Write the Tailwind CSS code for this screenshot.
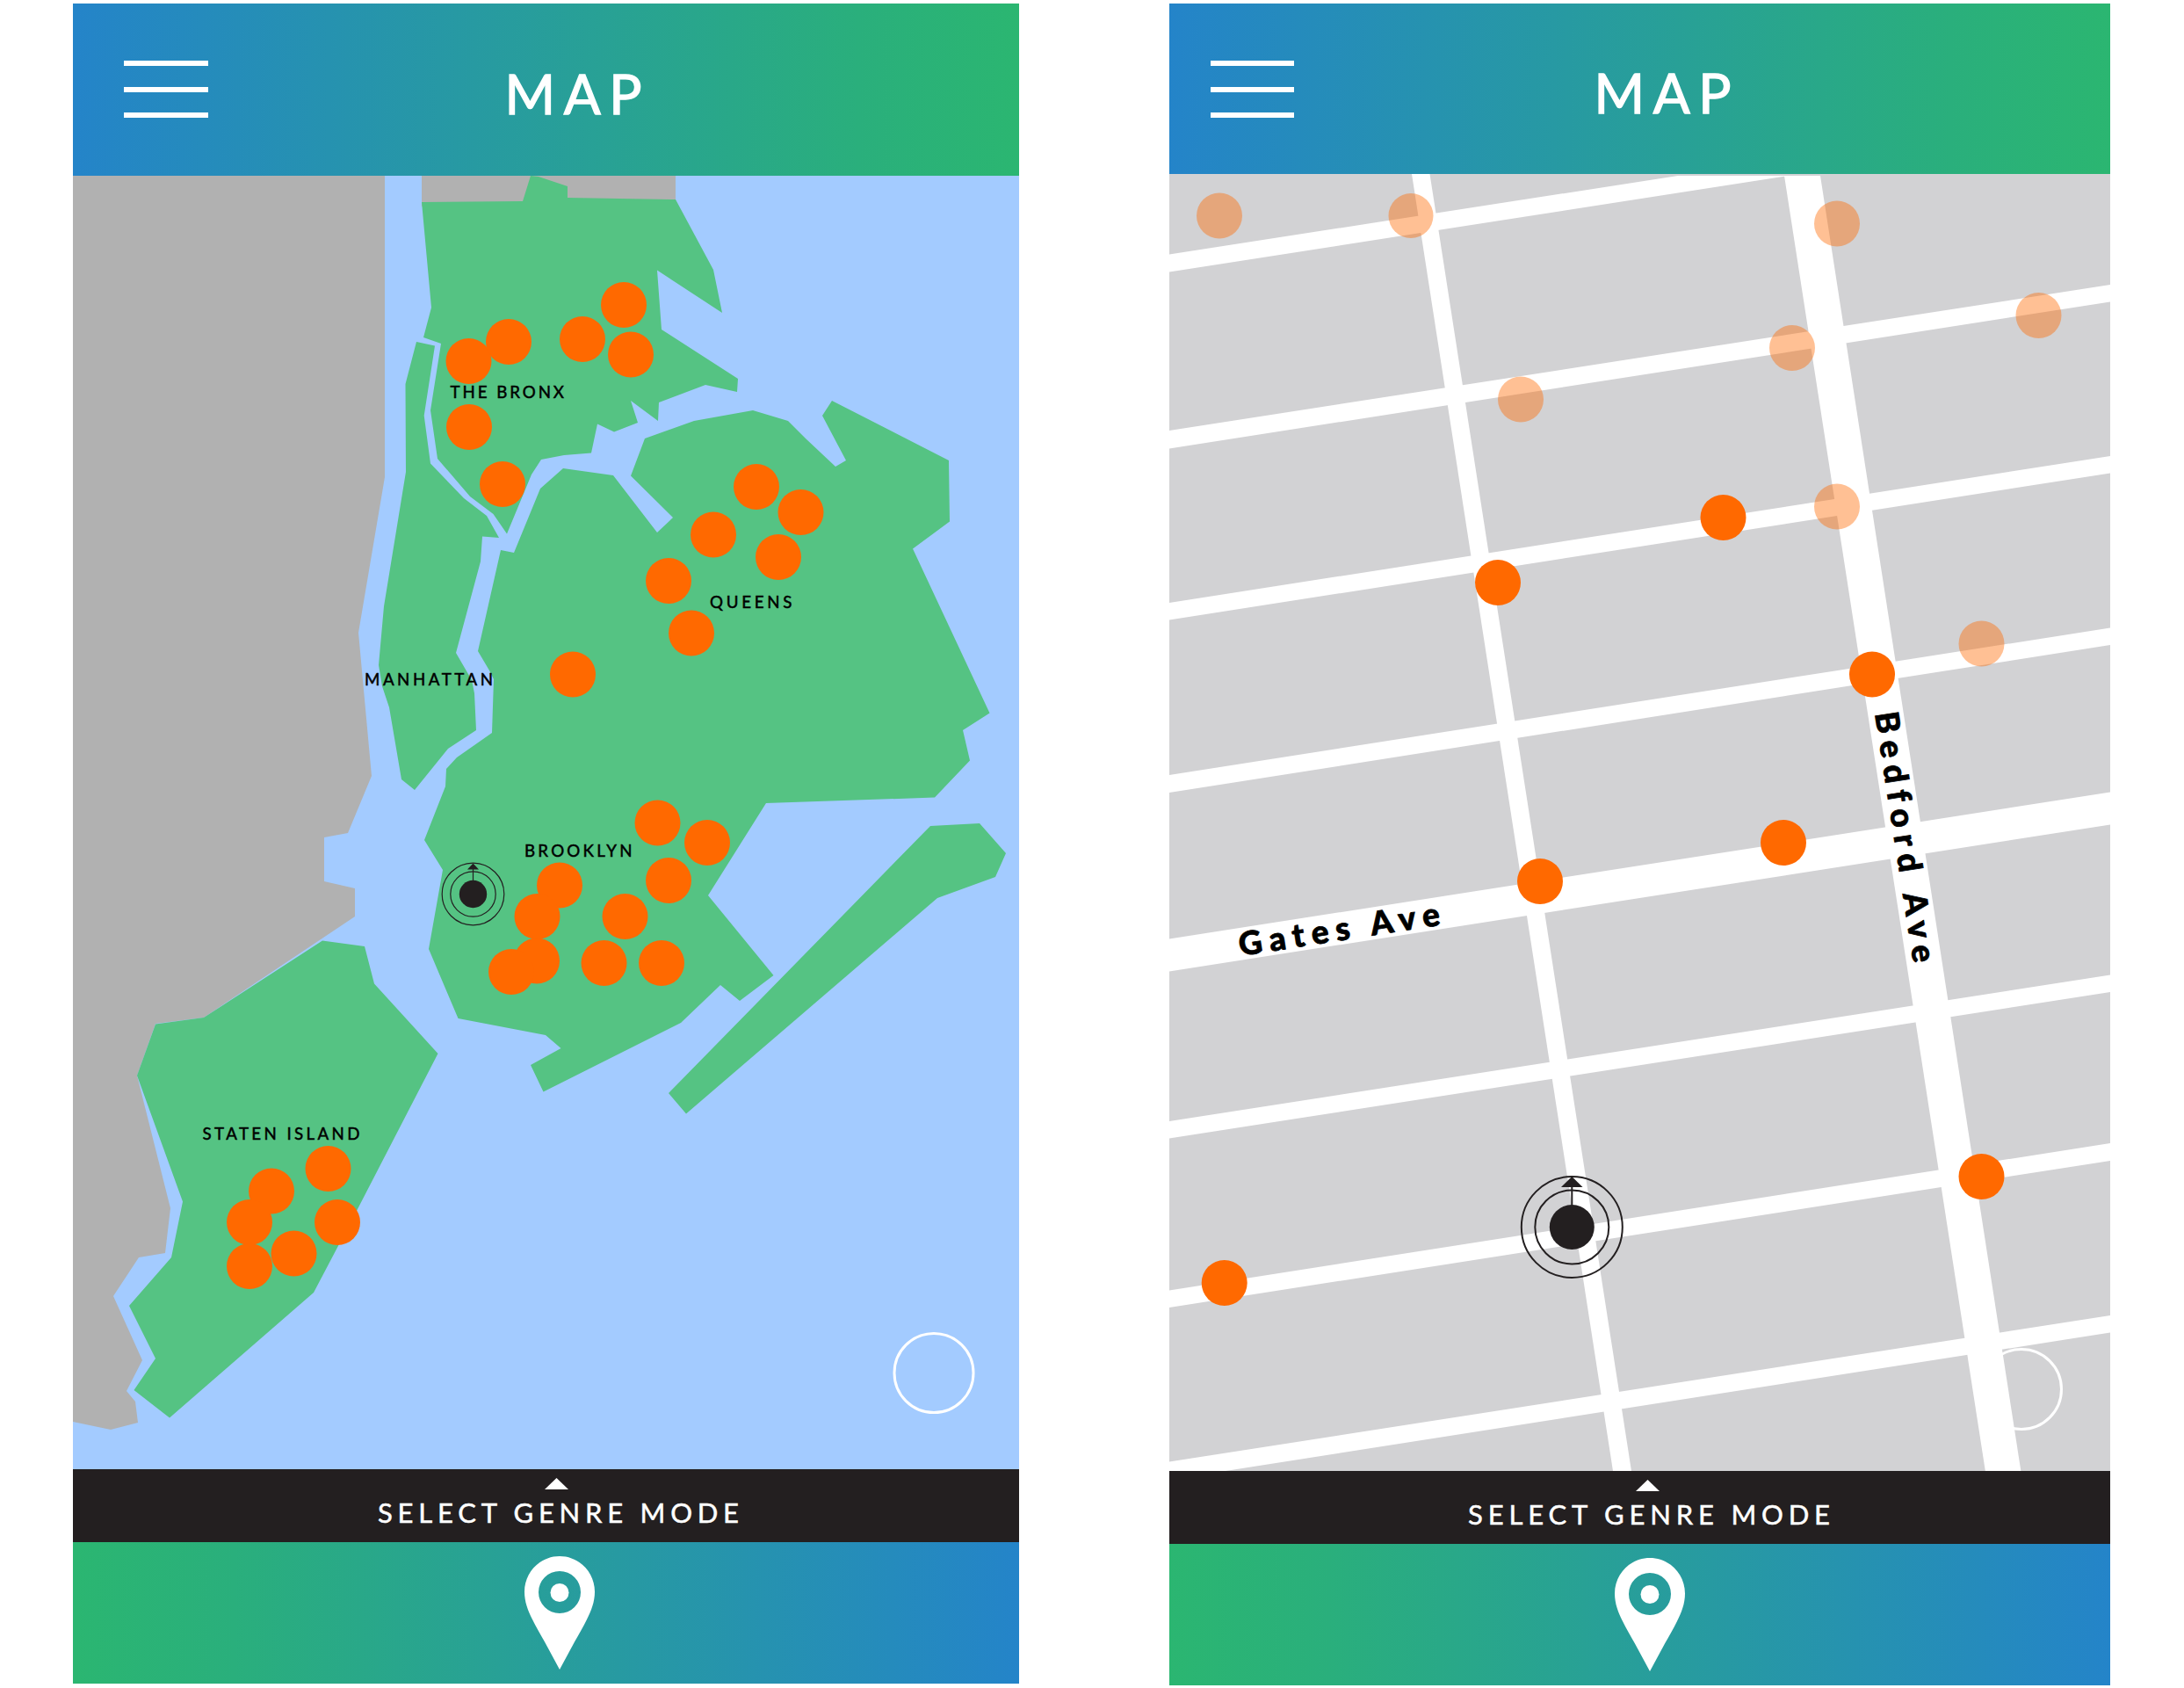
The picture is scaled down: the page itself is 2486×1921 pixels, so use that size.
<!DOCTYPE html>
<html lang="en">
<head>
<meta charset="utf-8">
<title>Map</title>
<script src="https://cdn.jsdelivr.net/npm/@tailwindcss/browser@4"></script>
</head>
<body class="bg-white w-[2486px] h-[1921px] overflow-hidden font-['Lato',sans-serif]">
<svg class="hidden">
  <symbol id="pin" viewBox="0 0 80 129">
    <path fill="#fff" fill-rule="evenodd" d="M40 0C18 0 0 18 0 40.500C0 52 4 62 9 72C13 80 18 89 23 97.500L40 129L57 97.500C62 89 67 80 71 72C76 62 80 52 80 40.500C80 18 62 0 40 0ZM40 17A24 24 0 1 1 40 65A24 24 0 1 1 40 17Z"/>
    <circle cx="40" cy="41.500" r="10.500" fill="#fff"/>
  </symbol>
</svg>
<main class="flex items-start gap-[171px] pl-[83px] pt-1">

  <!-- Borough overview -->
  <section class="w-[1077px] flex flex-col">
    <header class="h-[196px] flex items-start bg-linear-to-r/srgb from-[#2484c9] via-[#2aaf7c] via-83% to-[#2bb671] pl-[58px]">
      <div class="w-24 pt-[65px] flex flex-col gap-[23.500px]">
        <span class="h-1.5 bg-white"></span><span class="h-1.5 bg-white"></span><span class="h-1.5 bg-white"></span>
      </div>
      <svg class="ml-[339px] mt-[76px] w-[154px] h-[50px] overflow-visible" fill="#fff" stroke="#fff" stroke-width="1.400"><text x="-1.500" y="50" font-size="62" textLength="156">MAP</text></svg>
    </header>
    <svg class="w-[1077px] h-[1472px] bg-[#a3cbff]" viewBox="83 200 1077 1472">
      <g fill="#b1b1b1">
        <path d="M83 200H438V543L408 720L423 883L396 948L369 953V1003L404 1011V1043L232 1158L177 1165L156 1224L194 1375L188 1426L158 1431L129 1475L162 1548L144 1583L154 1595L157 1619L126 1627L83 1618Z"/>
        <path d="M480 200H769V235H480Z"/>
      </g>
      <g fill="#55c383">
        <path d="M480 230L595 229L604 200L613 201L646 212V225L769 227L812 307L822 356L748 307.500L753 375L840 431L839 446L803 438L750 458L749 479L718 456L726 481L699 491.500L680 482.500L673 515.500L642 518L616 523L605 540L577 607.500L561.500 585L535 565L498 522L490 467L502 391L482 384L491 350Z"/>
        <path d="M474 389L495 393.500L482.700 473L490 527.500L528 567L554 587L568 612L549 610.500L547 639L519 743L537 774L540 789L542 831L510 852L472 899L457 887L443 805L435 781L431 757L437 690L462 537L461.500 437Z"/>
        <path d="M570 626L585 629L615 556L641 533L698 541L748 606L766 589L718 541.500L734 499L790 479L857 467L897 479L917 499L951 531L963 524L936 473L947 456L1080 524L1081 593.500L1039 624.500L1126.500 811.500L1096 831L1104 865.500L1064 907.500L872 914L806 1019L880.500 1110L842 1139L820 1121L775 1164L618.500 1242.500L604 1212L638.500 1193L621 1178L521.500 1159L488 1080L504 990L483 956L507 895L508 875L520 862L560 834L562 773L557 763L544 741Z"/>
        <path d="M1059 940L1115 937L1145 971L1133 998L1067 1022L781 1267.500L761 1244Z"/>
        <path d="M367 1070.500L415 1077L426 1119.500L498.500 1199L407 1376L357 1471L193 1613.500L152.500 1582L177 1546L147 1486L195 1431L208 1367.500L156 1224L177 1165.500L232 1158Z"/>
      </g>
      <g fill="#ff6900">
        <circle cx="533.500" cy="411" r="26"/><circle cx="579" cy="389" r="26"/><circle cx="663" cy="386" r="26"/><circle cx="710" cy="347" r="26"/><circle cx="718" cy="403.500" r="26"/><circle cx="534" cy="486" r="26"/><circle cx="572" cy="551" r="26"/>
        <circle cx="861" cy="554" r="26"/><circle cx="911.500" cy="583" r="26"/><circle cx="812" cy="608.500" r="26"/><circle cx="886" cy="634" r="26"/><circle cx="761" cy="661" r="26"/><circle cx="787" cy="720.500" r="26"/><circle cx="652" cy="767.500" r="26"/>
        <circle cx="748.500" cy="936.500" r="26"/><circle cx="805" cy="959" r="26"/><circle cx="761" cy="1002" r="26"/><circle cx="637" cy="1007.500" r="26"/><circle cx="711.500" cy="1043" r="26"/><circle cx="611.500" cy="1043" r="26"/><circle cx="611" cy="1093.500" r="26"/><circle cx="582" cy="1106" r="26"/><circle cx="687.500" cy="1096" r="26"/><circle cx="753" cy="1096" r="26"/>
        <circle cx="373.500" cy="1330" r="26"/><circle cx="309" cy="1355.500" r="26"/><circle cx="284" cy="1391" r="26"/><circle cx="384" cy="1391" r="26"/><circle cx="334.500" cy="1426.500" r="26"/><circle cx="284" cy="1441" r="26"/>
      </g>
      <g fill="none" stroke="#231f20" stroke-width="1.200">
        <circle cx="538.500" cy="1017.500" r="35.300"/><circle cx="538.500" cy="1017.500" r="25.700"/><path d="M538.500 1005V986"/>
        <circle cx="538.500" cy="1017.500" r="15.700" fill="#231f20" stroke="none"/><path d="M538.500 982.500L545 989.500H532Z" fill="#231f20" stroke="none"/>
      </g>
      <g fill="#000" stroke="#000" stroke-width=".5" font-size="18.700">
        <text x="512.500" y="453" textLength="129.500">THE BRONX</text>
        <text x="808" y="692" textLength="93.500">QUEENS</text>
        <text x="415" y="780" textLength="146">MANHATTAN</text>
        <text x="597" y="975" textLength="122.500">BROOKLYN</text>
        <text x="230.500" y="1297" textLength="179">STATEN ISLAND</text>
      </g>
      <circle cx="1063" cy="1562.500" r="45" fill="none" stroke="#fff" stroke-width="3"/>
    </svg>
    <div class="h-[83px] bg-[#231f20] flex flex-col items-start">
      <svg class="ml-[537px] mt-[10px] w-[27px] h-[13px]" viewBox="0 0 27 13"><path d="M13.500 0L27 13H0Z" fill="#fff"/></svg>
      <svg class="ml-[348px] mt-[15px] w-[410px] h-[23px] overflow-visible" fill="#fff" stroke="#fff" stroke-width=".5"><text x="-1" y="23" font-size="31" textLength="411">SELECT GENRE MODE</text></svg>
    </div>
    <footer class="h-[161px] bg-linear-to-r/srgb from-[#2bb671] via-[#2aaf7c] via-17% to-[#2484c9]">
      <svg class="ml-[514px] mt-4 w-20 h-[129px]"><use href="#pin"/></svg>
    </footer>
  </section>

  <!-- Street level -->
  <section class="w-[1071px] flex flex-col">
    <header class="h-[194px] flex items-start bg-linear-to-r/srgb from-[#2484c9] via-[#2aaf7c] via-83% to-[#2bb671] pl-[47px]">
      <div class="w-[95px] pt-[65px] flex flex-col gap-[23.500px]">
        <span class="h-1.5 bg-white"></span><span class="h-1.5 bg-white"></span><span class="h-1.5 bg-white"></span>
      </div>
      <svg class="ml-[343px] mt-[75px] w-[154px] h-[50px] overflow-visible" fill="#fff" stroke="#fff" stroke-width="1.400"><text x="-1.500" y="50" font-size="62" textLength="156">MAP</text></svg>
    </header>
    <svg class="w-[1071px] h-[1476px] bg-[#d2d2d4]" viewBox="1331 198 1071 1476">
      <circle cx="2301" cy="1581" r="45.500" fill="none" stroke="#fff" stroke-width="3"/>
      <g fill="#fff">
        <path d="M1331 289.500L1910 200H2035L1331 309.500Z"/>
        <path d="M1331 490L2402 324V343.500L1331 510.500Z"/>
        <path d="M1331 686L2402 519V538.500L1331 705.500Z"/>
        <path d="M1331 882L2402 714.500V734L1331 902Z"/>
        <path d="M1331 1068.500L2402 901.500V938.500L1331 1105.500Z"/>
        <path d="M1331 1276L2402 1109.500V1129L1331 1295.500Z"/>
        <path d="M1331 1468.500L2402 1301V1321L1331 1488Z"/>
        <path d="M1331 1663.500L2402 1497V1516.500L1331 1684Z"/>
        <path d="M1607 198H1627.500L1857 1674H1836Z"/>
        <path d="M2031 200H2072L2300.500 1675H2260Z"/>
      </g>
      <g fill="#ff6900">
        <circle cx="1961.500" cy="589" r="26"/><circle cx="1705" cy="663" r="26"/><circle cx="2131" cy="767.500" r="26"/><circle cx="2030" cy="959" r="26"/><circle cx="1753" cy="1003" r="26"/><circle cx="2255.500" cy="1339" r="26"/><circle cx="1393.700" cy="1460" r="26"/>
      </g>
      <g fill="#ff6900" fill-opacity=".42">
        <circle cx="1388" cy="245.500" r="26"/><circle cx="1606" cy="245.500" r="25.500"/><circle cx="2091" cy="254.500" r="26"/><circle cx="2320.500" cy="359" r="26"/><circle cx="2040" cy="396" r="26"/><circle cx="1731" cy="454.500" r="26"/><circle cx="2091" cy="576.500" r="26"/><circle cx="2255.500" cy="732.500" r="26"/>
      </g>
      <g fill="none" stroke="#231f20" stroke-width="2">
        <circle cx="1789.300" cy="1396.500" r="57.500"/><circle cx="1789.300" cy="1396.500" r="42"/><path d="M1789.300 1380V1345"/>
        <circle cx="1789.300" cy="1396.500" r="25.500" fill="#231f20" stroke="none"/><path d="M1789.300 1339L1801.500 1351H1777Z" fill="#231f20" stroke="none"/>
      </g>
      <g fill="#000" stroke="#000" stroke-width=".8" font-size="37" font-weight="900">
        <text transform="translate(1412 1088) rotate(-8.800)" textLength="231">Gates Ave</text>
        <text transform="translate(2134 812) rotate(81.200)" textLength="288">Bedford Ave</text>
      </g>
    </svg>
    <div class="h-[83px] bg-[#231f20] flex flex-col items-start">
      <svg class="ml-[531px] mt-[10px] w-[27px] h-[13px]" viewBox="0 0 27 13"><path d="M13.500 0L27 13H0Z" fill="#fff"/></svg>
      <svg class="ml-[341px] mt-[15px] w-[411px] h-[23px] overflow-visible" fill="#fff" stroke="#fff" stroke-width=".5"><text x="-1" y="23" font-size="31" textLength="412">SELECT GENRE MODE</text></svg>
    </div>
    <footer class="h-[161px] bg-linear-to-r/srgb from-[#2bb671] via-[#2aaf7c] via-17% to-[#2484c9]">
      <svg class="ml-[507px] mt-4 w-20 h-[129px]"><use href="#pin"/></svg>
    </footer>
  </section>
</main>
</body>
</html>
